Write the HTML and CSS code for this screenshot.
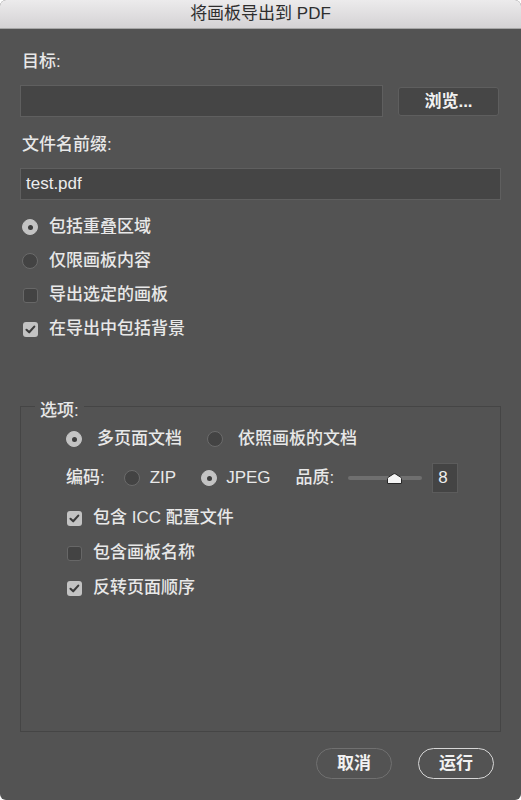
FILE: index.html
```html
<!DOCTYPE html>
<html lang="zh-CN">
<head>
<meta charset="utf-8">
<title>将画板导出到 PDF</title>
<link rel="stylesheet" href="styles.css">
</head>
<body>
<div class="dialog">
  <div class="titlebar">将画板导出到 PDF</div>
  <div class="content">
    <div class="label label-target">目标:</div>
    <div class="target-row">
      <div class="field field-target"></div>
      <div class="btn-browse">浏览...</div>
    </div>
    <div class="label label-name">文件名前缀:</div>
    <div class="field field-name">test.pdf</div>

    <div class="choices">
      <div class="opt"><span class="radio on"></span><span>包括重叠区域</span></div>
      <div class="opt"><span class="radio"></span><span>仅限画板内容</span></div>
      <div class="opt"><span class="check"></span><span>导出选定的画板</span></div>
      <div class="opt"><span class="check on"><svg viewBox="0 0 15 15" width="15" height="15"><polyline points="3.5,7.8 6.2,10.3 11.3,4.6" fill="none" stroke="#3b3b3b" stroke-width="2.1" stroke-linecap="round" stroke-linejoin="round"/></svg></span><span>在导出中包括背景</span></div>
    </div>

    <div class="group">
      <span class="legend">选项:</span>
      <div class="row row-mode">
        <span class="radio on"></span><span class="t-mode">多页面文档</span>
        <span class="radio r-second"></span><span class="t-mode2">依照画板的文档</span>
      </div>
      <div class="row row-enc">
        <span class="enc-label">编码:</span>
        <span class="radio r-zip"></span><span class="t-zip">ZIP</span>
        <span class="radio on r-jpeg"></span><span class="t-jpeg">JPEG</span>
        <span class="q-label">品质:</span>
        <svg class="slider" viewBox="0 0 74 11" width="74" height="11">
          <rect x="0" y="3" width="74" height="4" rx="2" fill="#6f6f6f"/>
          <path d="M39.5 10.5 L39.5 5.6 Q39.5 4.8 40.2 4.3 L45.6 0.9 Q46.5 0.4 47.4 0.9 L52.8 4.3 Q53.5 4.8 53.5 5.6 L53.5 10.5 Z" fill="#f3f3f3" stroke="#262626" stroke-width="1"/>
        </svg>
        <span class="num">8</span>
      </div>
      <div class="checks">
        <div class="opt"><span class="check on"><svg viewBox="0 0 15 15" width="15" height="15"><polyline points="3.5,7.8 6.2,10.3 11.3,4.6" fill="none" stroke="#3b3b3b" stroke-width="2.1" stroke-linecap="round" stroke-linejoin="round"/></svg></span><span>包含 ICC 配置文件</span></div>
        <div class="opt"><span class="check"></span><span>包含画板名称</span></div>
        <div class="opt"><span class="check on"><svg viewBox="0 0 15 15" width="15" height="15"><polyline points="3.5,7.8 6.2,10.3 11.3,4.6" fill="none" stroke="#3b3b3b" stroke-width="2.1" stroke-linecap="round" stroke-linejoin="round"/></svg></span><span>反转页面顺序</span></div>
      </div>
    </div>

    <div class="actions">
      <div class="pill">取消</div>
      <div class="pill pill-default">运行</div>
    </div>
  </div>
</div>
</body>
</html>
```
FILE: styles.css
```css
* { box-sizing: border-box; }
html, body { margin: 0; padding: 0; background: #ffffff; }
body {
  font-family: "Liberation Sans", "Noto Sans CJK SC", sans-serif;
  font-size: 17px;
  font-weight: 500;
  color: #e8e8e8;
}
.dialog {
  width: 521px;
  height: 800px;
  background: #535353;
  border-radius: 6px;
  overflow: hidden;
}
.titlebar {
  height: 29px;
  line-height: 28px;
  text-align: center;
  color: #2e2e2e;
  font-weight: 400;
  background: linear-gradient(#ecebec, #d4d2d4);
  border-bottom: 1px solid #a6a6a6;
}
.content { padding: 0 20px; }
.label { line-height: 20px; padding-left: 2px; }
.label-target { margin-top: 23px; }
.label-name { margin-top: 18px; }
.target-row {
  margin-top: 13px;
  height: 32px;
  display: flex;
  align-items: center;
  gap: 15px;
}
.field {
  height: 32px;
  background: #454545;
  border: 1px solid #5f5f5f;
}
.field-target { width: 363px; }
.btn-browse {
  width: 101px;
  height: 29px;
  line-height: 27px;
  text-align: center;
  background: #464646;
  border: 1px solid #5e5e5e;
  border-radius: 3px;
  color: #f2f2f2;
  font-weight: 700;
}
.field-name {
  margin-top: 13px;
  padding-left: 5px;
  line-height: 30px;
  font-weight: 400;
  color: #ececec;
}
.choices {
  margin-top: 17px;
  display: flex;
  flex-direction: column;
  gap: 14px;
  padding-left: 2px;
}
.opt {
  display: flex;
  align-items: center;
  height: 20px;
  line-height: 20px;
  gap: 11px;
}
.radio {
  flex: none;
  width: 16px;
  height: 16px;
  border-radius: 50%;
  background: #434343;
  border: 1px solid #6b6b6b;
  position: relative;
}
.radio.on {
  background: #c3c3c3;
  border-color: #c3c3c3;
}
.radio.on::after {
  content: "";
  position: absolute;
  left: 4.5px;
  top: 4.5px;
  width: 5px;
  height: 5px;
  border-radius: 50%;
  background: #3c3c3c;
}
.check {
  flex: none;
  width: 15px;
  height: 15px;
  border-radius: 3px;
  background: #434343;
  border: 1px solid #676767;
  margin-left: 1px;
  display: flex;
}
.check.on {
  background: #c3c3c3;
  border: none;
}
.check svg { display: block; }

.group {
  position: relative;
  margin-top: 67px;
  height: 326px;
  border: 1px solid #454545;
  padding: 22px 0 0 45px;
}
.legend {
  position: absolute;
  top: -6px;
  left: 14px;
  padding: 0 5px;
  line-height: 20px;
  background: #535353;
}
.row {
  display: flex;
  align-items: center;
  line-height: 20px;
}
.row-mode { height: 20px; }
.row-mode .t-mode { margin-left: 15px; }
.row-mode .r-second { margin-left: 25px; }
.row-mode .t-mode2 { margin-left: 15px; }
.row-enc { height: 30px; margin-top: 14px; }
.r-zip { margin-left: 19px; }
.t-zip { margin-left: 10px; font-weight: 400; }
.r-jpeg { margin-left: 25px; }
.t-jpeg { margin-left: 9px; font-weight: 400; }
.q-label { margin-left: 25px; }
.slider { display: block; margin-left: 14px; margin-top: 1px; }
.num {
  margin-left: 10px;
  width: 26px;
  height: 30px;
  line-height: 28px;
  padding-left: 5px;
  background: #444444;
  border: 1px solid #5c5c5c;
  font-weight: 400;
  color: #eeeeee;
}
.checks {
  margin-top: 15px;
  display: flex;
  flex-direction: column;
  gap: 15px;
}
.actions {
  margin-top: 16px;
  display: flex;
  justify-content: flex-end;
  gap: 26px;
  padding-right: 7px;
}
.pill {
  width: 76px;
  height: 31px;
  line-height: 29px;
  text-align: center;
  border: 1px solid #707070;
  border-radius: 16px;
  color: #f2f2f2;
  font-weight: 700;
}
.pill-default {
  border: 1.5px solid #d6d6d6;
}
```
